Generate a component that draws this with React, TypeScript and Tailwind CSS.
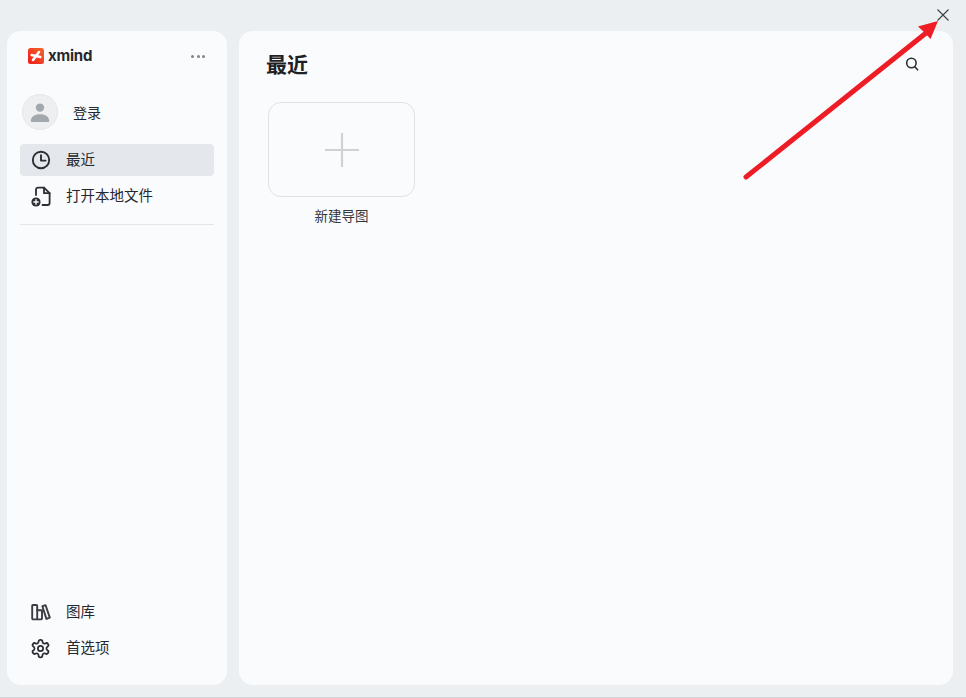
import React from "react";

function NavItem({ icon, label, active }: { icon: React.ReactNode; label: string; active?: boolean }) {
  return (
    <div className={`flex h-8 items-center rounded-[4px] ${active ? "bg-[#e4e7eb]" : ""}`}>
      <div className="flex w-[46px] shrink-0 items-center pl-[10px]">{icon}</div>
      <span className="mb-[2px] text-[14.5px] leading-[30px] text-[#25282c]">{label}</span>
    </div>
  );
}

const Clock = () => (
  <svg width="20" height="20" viewBox="0 0 20 20" fill="none" stroke="#2b2e33" strokeWidth="1.9" strokeLinecap="round" strokeLinejoin="round" className="ml-[1px]">
    <circle cx="10" cy="10" r="8.2" />
    <path d="M10 5.2V10.6H14.6" />
  </svg>
);

const OpenFile = () => (
  <svg width="22" height="22" viewBox="0 0 22 22" fill="none" stroke="#2b2e33" strokeWidth="1.8" strokeLinecap="round" strokeLinejoin="round">
    <path d="M6 10V4.6C6 3.4 6.9 2.6 8 2.6H14L19.6 8.2V18C19.6 19.2 18.7 20 17.6 20H12.5" />
    <path d="M14 2.6V8.2H19.6" />
    <circle cx="6" cy="17" r="4.6" fill="#2b2e33" stroke="none" />
    <path d="M6 14.8V19.2M3.8 17H8.2" stroke="#fafbfd" strokeWidth="1.4" />
  </svg>
);

const Library = () => (
  <svg width="20" height="18" viewBox="0 0 20 18" fill="none" stroke="#3a3d42" strokeWidth="1.9" strokeLinecap="round" strokeLinejoin="round" className="ml-[1px]">
    <rect x="1.2" y="2" width="5" height="14.4" rx="0.8" />
    <path d="M6.2 7.2H11V15.6C11 16.1 10.6 16.4 10.2 16.4H6.2" />
    <path d="M11.4 3.2L14.6 2.2L18.8 14.6L15.4 15.9L11.4 3.2Z" />
  </svg>
);

const Gear = () => (
  <svg width="21" height="21" viewBox="0 0 24 24" fill="none" stroke="#2b2e33" strokeWidth="2" strokeLinecap="round" strokeLinejoin="round" className="-my-1">
    <path d="M12.22 2h-.44a2 2 0 0 0-2 2v.18a2 2 0 0 1-1 1.73l-.43.25a2 2 0 0 1-2 0l-.15-.08a2 2 0 0 0-2.73.73l-.22.38a2 2 0 0 0 .73 2.73l.15.1a2 2 0 0 1 1 1.72v.51a2 2 0 0 1-1 1.74l-.15.09a2 2 0 0 0-.73 2.73l.22.38a2 2 0 0 0 2.73.73l.15-.08a2 2 0 0 1 2 0l.43.25a2 2 0 0 1 1 1.73V20a2 2 0 0 0 2 2h.44a2 2 0 0 0 2-2v-.18a2 2 0 0 1 1-1.73l.43-.25a2 2 0 0 1 2 0l.15.08a2 2 0 0 0 2.73-.73l.22-.39a2 2 0 0 0-.73-2.73l-.15-.08a2 2 0 0 1-1-1.74v-.5a2 2 0 0 1 1-1.74l.15-.09a2 2 0 0 0 .73-2.73l-.22-.38a2 2 0 0 0-2.73-.73l-.15.08a2 2 0 0 1-2 0l-.43-.25a2 2 0 0 1-1-1.73V4a2 2 0 0 0-2-2z" />
    <circle cx="12" cy="12" r="3" />
  </svg>
);

export default function App() {
  return (
    <div className="relative flex h-[698px] w-[966px] flex-col overflow-hidden border-b border-[#d4d7da] bg-[#eceff1] font-['Noto_Sans_CJK_SC','Liberation_Sans',sans-serif]">
      {/* Title bar */}
      <div className="flex h-[31px] shrink-0 items-start justify-end pr-[17px] pt-[9px]">
        <svg width="12" height="12" viewBox="0 0 12 12" fill="none" stroke="#3d4044" strokeWidth="1.1">
          <path d="M0.5 0.5L11.5 11.5M11.5 0.5L0.5 11.5" />
        </svg>
      </div>

      <div className="flex h-[654px] gap-3 pl-[7px] pr-[13px]">
        {/* Sidebar */}
        <aside className="flex w-[220px] shrink-0 flex-col rounded-[14px] bg-[#fafbfd] px-[13px]">
          <div className="flex h-[50px] items-center justify-between pl-2 pr-[9px]">
            <div className="flex items-center gap-1">
              <svg width="16" height="16" viewBox="0 0 16 16">
                <defs>
                  <linearGradient id="xm" x1="1" y1="0" x2="0" y2="1">
                    <stop offset="0" stopColor="#f4682c" />
                    <stop offset="1" stopColor="#f01818" />
                  </linearGradient>
                </defs>
                <rect width="16" height="16" rx="2.5" fill="url(#xm)" />
                <path d="M5 12L11 4" fill="none" stroke="#fff" strokeWidth="2.6" strokeLinecap="round" />
                <path d="M3.6 7L12.4 9" fill="none" stroke="#fff" strokeWidth="2.4" strokeLinecap="round" />
              </svg>
              <span className="font-['Inter',sans-serif] text-[15px] font-bold leading-4 tracking-[-0.2px] text-[#26282b]">xmind</span>
            </div>
            <div className="flex gap-[2.5px]">
              <span className="h-[3px] w-[3px] rounded-full bg-[#808489]" />
              <span className="h-[3px] w-[3px] rounded-full bg-[#808489]" />
              <span className="h-[3px] w-[3px] rounded-full bg-[#808489]" />
            </div>
          </div>

          <div className="mt-[13px] flex items-center pl-[2px]">
            <div className="flex h-9 w-9 items-center justify-center rounded-full border border-[#e4e6e9] bg-[#edeff1]">
              <svg width="20" height="20" viewBox="0 0 20 20" fill="#a3a8ad">
                <circle cx="10" cy="5.6" r="4.2" />
                <path d="M0.8 19C0.8 14.8 4.5 12.2 10 12.2C15.5 12.2 19.2 14.8 19.2 19C19.2 19.6 18.8 20 18.2 20H1.8C1.2 20 0.8 19.6 0.8 19Z" />
              </svg>
            </div>
            <span className="ml-[15px] text-[14px] leading-5 text-[#25282c]">登录</span>
          </div>

          <nav className="mt-[14px] flex flex-col gap-1">
            <NavItem icon={<Clock />} label="最近" active />
            <NavItem icon={<OpenFile />} label="打开本地文件" />
          </nav>
          <div className="mt-3 h-px bg-[#e3e5e8]" />

          <div className="mt-auto mb-[21px] flex flex-col gap-1">
            <NavItem icon={<Library />} label="图库" />
            <NavItem icon={<Gear />} label="首选项" />
          </div>
        </aside>

        {/* Main */}
        <main className="min-w-0 flex-1 rounded-[14px] bg-[#fafbfd] pl-[27px] pr-[34px]">
          <div className="flex h-[71px] items-start justify-between pt-[15px]">
            <h1 className="text-[21px] font-bold leading-[34px] text-[#1f2124]">最近</h1>
            <svg width="14" height="14" viewBox="0 0 14 14" fill="none" stroke="#2b2e33" strokeWidth="1.6" strokeLinecap="round" className="mt-[11px]">
              <circle cx="6.4" cy="6" r="4.7" />
              <path d="M9.8 9.8L12.6 12.8" />
            </svg>
          </div>
          <div className="ml-[2px] flex w-[147px] flex-col items-center">
            <div className="flex h-[95px] w-[147px] items-center justify-center rounded-[13px] border border-[#dfe1e4]">
              <svg width="36" height="36" viewBox="0 0 36 36" stroke="#cfd1d4" strokeWidth="2.2">
                <path d="M18 1V35M1 18H35" />
              </svg>
            </div>
            <span className="mt-2 text-[13.5px] leading-5 text-[#33363a]">新建导图</span>
          </div>
        </main>
      </div>

      {/* Annotation arrow over the page */}
      <svg className="pointer-events-none absolute left-0 top-0" width="966" height="698" viewBox="0 0 966 698">
        <path d="M746 177L926 33" stroke="#ee1c25" strokeWidth="5" strokeLinecap="round" fill="none" />
        <path d="M938 21L918 26.5L924 32L930.5 39Z" fill="#ee1c25" />
      </svg>
    </div>
  );
}
